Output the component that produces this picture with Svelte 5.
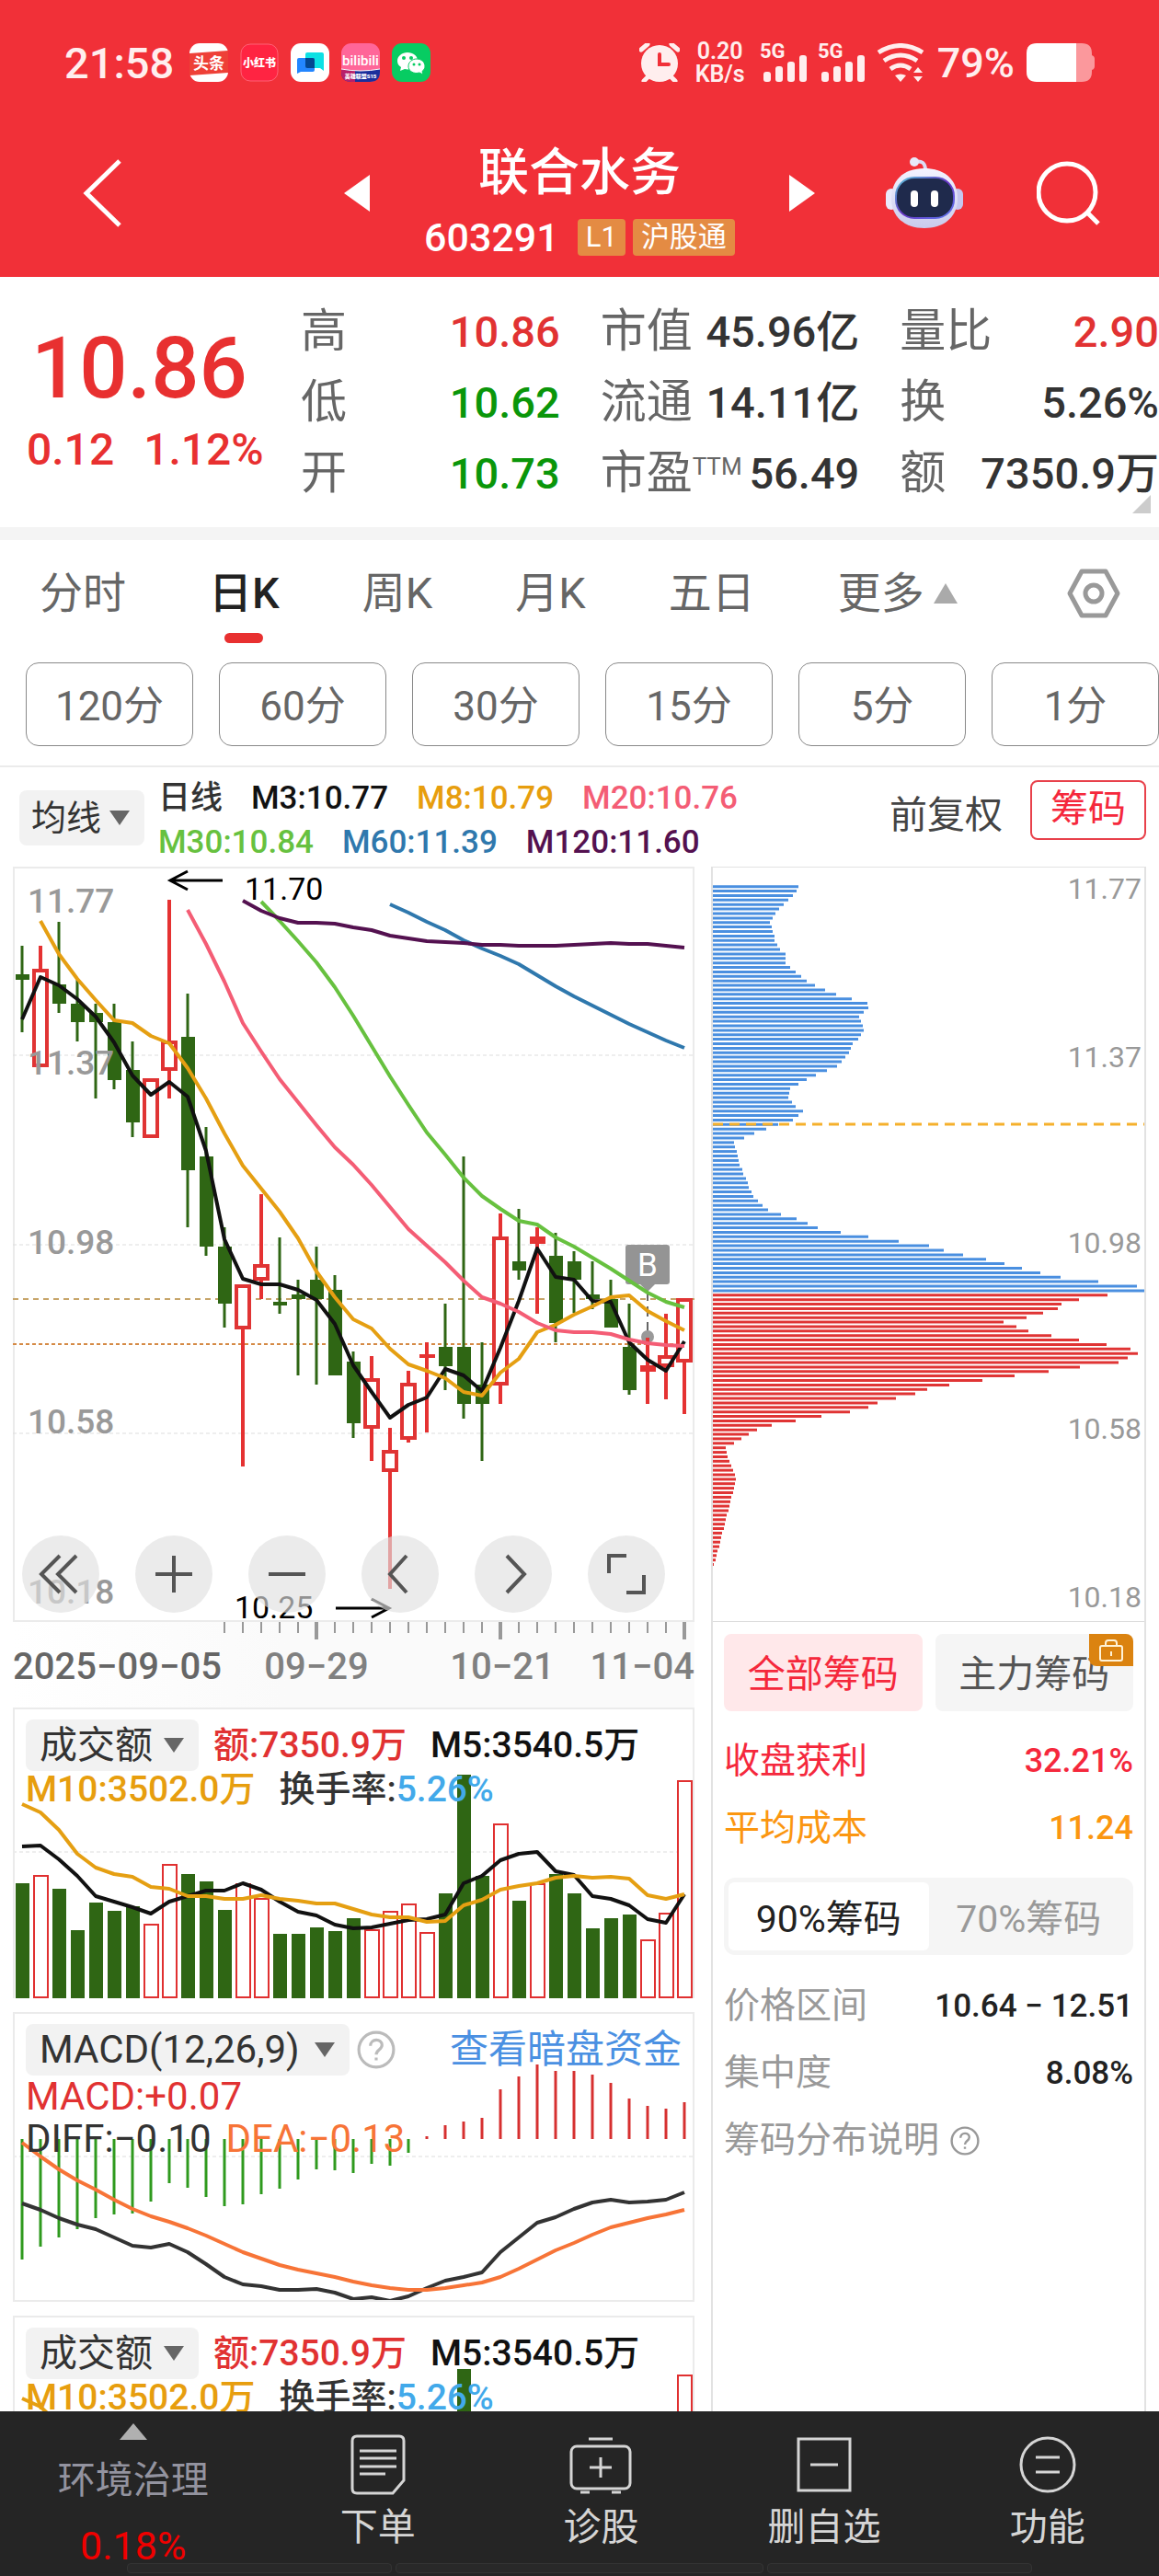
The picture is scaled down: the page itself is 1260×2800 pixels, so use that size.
<script>
  const stats = [
    [['高', '10.86', 'up'], ['低', '10.62', 'down'], ['开', '10.73', 'down']],
    [['市值', '45.96亿', ''], ['流通', '14.11亿', ''], ['市盈', '56.49', '', 'TTM']],
    [['量比', '2.90', 'up'], ['换', '5.26%', ''], ['额', '7350.9万', '']]
  ];

  const tabs = ['分时', '日K', '周K', '月K', '五日'];
  const periods = ['120分', '60分', '30分', '15分', '5分', '1分'];

  const legend = [
    [['日线', '#333'], ['M3:10.77', '#111'], ['M8:10.79', '#e79e0e'], ['M20:10.76', '#f45d75']],
    [['M30:10.84', '#67c13f'], ['M60:11.39', '#2f78ad'], ['M120:11.60', '#541150']]
  ];

  const x = (i) => 10 + i * 20;
  const line = (values, start = 0) => values.map((v, i) => `${x(i + start)},${v}`).join(' ');

  // direction, high, body top, body bottom, low
  const candles = [
    ['g', 86, 117, 123, 180], ['r', 86, 111, 218, 218], ['g', 60, 128, 149, 159], ['g', 123, 149, 169, 190],
    ['g', 149, 159, 169, 252], ['g', 149, 169, 232, 242], ['g', 190, 221, 278, 294], ['r', 230, 230, 295, 295],
    ['r', 36, 189, 222, 252], ['g', 138, 185, 330, 392], ['g', 283, 315, 413, 423], ['g', 392, 413, 475, 501],
    ['r', 454, 454, 503, 652], ['r', 356, 432, 450, 470], ['g', 403, 473, 477, 486], ['g', 449, 465, 470, 553],
    ['g', 413, 449, 470, 563], ['g', 444, 460, 553, 553], ['g', 527, 538, 605, 621], ['r', 532, 556, 611, 646],
    ['r', 610, 634, 658, 785], ['r', 548, 561, 623, 626], ['s', 517, 530, 534, 615], ['g', 475, 522, 543, 569],
    ['g', 315, 522, 584, 600], ['g', 517, 563, 584, 646], ['r', 377, 402, 564, 584], ['g', 372, 429, 439, 449],
    ['s', 392, 402, 410, 486], ['g', 398, 423, 496, 517], ['g', 418, 429, 449, 485], ['g', 429, 465, 470, 481],
    ['g', 449, 470, 501, 501], ['g', 475, 522, 569, 574], ['s', 512, 542, 549, 584], ['r', 486, 531, 544, 579],
    ['r', 469, 469, 539, 595]
  ];

  const averages = [
    { color: '#111', start: 0, values: [166, 120, 129, 144, 163, 191, 227, 248, 234, 250, 309, 405, 448, 454, 454, 460, 471, 497, 542, 571, 599, 585, 577, 546, 553, 570, 523, 472, 415, 446, 449, 472, 473, 517, 536, 548, 516] },
    { color: '#e59f12', start: 1, values: [59, 95, 122, 145, 167, 170, 184, 192, 219, 252, 290, 325, 350, 375, 404, 440, 468, 492, 502, 524, 541, 548, 556, 571, 575, 550, 535, 506, 498, 487, 478, 468, 466, 483, 494, 504] },
    { color: '#67c13f', start: 13, values: [38, 59, 81, 104, 131, 162, 195, 228, 259, 289, 313, 338, 358, 372, 385, 389, 403, 413, 425, 437, 450, 463, 473, 479] },
    { color: '#f45d75', start: 9, values: [47, 84, 125, 170, 201, 231, 256, 281, 305, 324, 346, 370, 394, 412, 430, 450, 468, 475, 484, 496, 504, 506, 506, 508, 514, 518, 520, 521] },
    { color: '#2f78ad', start: 20, values: [41, 50, 60, 69, 80, 89, 97, 106, 118, 130, 141, 151, 161, 171, 180, 189, 197] },
    { color: '#541150', start: 12, values: [37, 48, 56, 61, 61, 62, 66, 69, 75, 78, 81, 82, 83, 85, 85, 86, 86, 86, 85, 84, 83, 84, 84, 86, 88] }
  ];

  const priceMarks = [['11.77', 50], ['11.37', 226], ['10.98', 421], ['10.58', 616], ['10.18', 801]];
  const chipMarks = [['11.77', 35], ['11.37', 218], ['10.98', 420], ['10.58', 622], ['10.18', 805]];
  const ticks = Array.from({ length: 26 }, (_, i) => i + 11);

  const volumeTops = [191, 182, 197, 242, 212, 221, 216, 235, 170, 181, 189, 220, 191, 207, 246, 246, 239, 243, 229, 241, 221, 213, 244, 202, 73, 183, 126, 210, 191, 181, 202, 240, 229, 225, 252, 223, 79];
  const volumeM5 = [151, 150, 165, 183, 205, 211, 217, 224, 211, 205, 199, 199, 191, 198, 211, 222, 226, 236, 240, 239, 235, 231, 230, 225, 191, 183, 166, 159, 157, 178, 182, 205, 208, 215, 230, 234, 203];
  const volumeM10 = [105, 114, 133, 159, 174, 181, 184, 195, 197, 205, 205, 208, 208, 204, 208, 210, 213, 213, 219, 225, 228, 228, 233, 232, 215, 209, 198, 194, 191, 185, 183, 185, 184, 186, 204, 208, 203];

  const macdBars = [269, 255, 245, 236, 224, 220, 219, 206, 186, 191, 201, 211, 209, 198, 192, 182, 171, 172, 175, 165, 167, 153, 135, 123, 119, 115, 84, 70, 57, 64, 64, 68, 77, 94, 102, 105, 98];
  const diff = [208, 215, 224, 231, 236, 245, 254, 256, 252, 261, 274, 288, 296, 298, 302, 302, 301, 305, 312, 310, 314, 309, 300, 292, 288, 283, 261, 245, 229, 223, 214, 207, 204, 207, 206, 204, 196];
  const dea = [142, 157, 171, 183, 193, 204, 214, 222, 228, 235, 243, 252, 261, 268, 275, 280, 284, 288, 293, 297, 300, 302, 302, 300, 297, 294, 288, 279, 269, 259, 251, 242, 234, 229, 224, 220, 215];

  const chipsAbove = [93, 91, 87, 82, 77, 72, 68, 65, 62, 64, 65, 67, 67, 70, 73, 79, 79, 79, 84, 90, 96, 102, 111, 122, 134, 151, 168, 169, 164, 159, 161, 163, 164, 161, 158, 152, 150, 148, 144, 140, 135, 124, 112, 102, 93, 84, 83, 82, 86, 90, 98, 93, 87, 71, 58, 45, 34, 23, 24, 26, 27, 28, 29, 32, 33, 36, 38, 39, 42, 44, 49, 54, 60, 74, 91, 103, 114, 139, 169, 202, 235, 251, 272, 297, 317, 336, 356, 378, 419, 461, 471];
  const chipsBelow = [429, 398, 379, 375, 359, 341, 316, 330, 343, 368, 398, 428, 454, 462, 451, 441, 399, 365, 328, 293, 257, 233, 220, 199, 179, 169, 149, 118, 90, 64, 48, 39, 31, 23, 14, 15, 16, 18, 20, 22, 24, 25, 24, 23, 22, 20, 19, 18, 17, 15, 14, 13, 12, 10, 9, 8, 7, 5, 4, 3, 1];
  const chips = [...chipsAbove, ...chipsBelow];

  const controls = [
    ['回到最早', 'M41 22 21 42l20 20M59 22 39 42l20 20'],
    ['放大', 'M22 42h40M42 22v40'],
    ['缩小', 'M22 42h40'],
    ['向前', 'M49 22 31 42l18 20'],
    ['向后', 'M35 22l19 20-19 20'],
    ['全屏', 'M42 22H23v19M61 43v19H42']
  ];
</script>

{#snippet picker(label, text)}
  <span class="picker">
    <select aria-label={label}><option>{text}</option></select>
    <svg width="22" height="16" viewBox="0 0 22 16" aria-hidden="true"><path d="M0 0h22L11 16z" fill="#666" /></svg>
  </span>
{/snippet}

{#snippet signal()}
  <svg class="signal" width="50" height="42" viewBox="0 0 50 42" aria-hidden="true">
    <text x="-1" y="16" font-size="22" font-weight="700">5G</text>
    <rect x="3" y="31" width="8" height="11" rx="3" />
    <rect x="16" y="25" width="8" height="17" rx="3" />
    <rect x="29" y="20" width="8" height="22" rx="3" />
    <rect x="42" y="13" width="8" height="29" rx="3" />
  </svg>
{/snippet}

{#snippet help(size)}
  <svg width={size} height={size} viewBox="0 0 40 40" fill="none" stroke="currentColor" stroke-width="3" aria-hidden="true">
    <circle cx="20" cy="20" r="18" />
    <path d="M14 16c0-8 12-8 12-1 0 5-6 5-6 10M20 28v3" />
  </svg>
{/snippet}

{#snippet volume(shift)}
  <section class="box open">
    <svg class="plot" viewBox="2 {2 + shift} 737 314" role="img" aria-label="成交额">
      <path d="M0 157H741" class="grid" />
      {#each volumeTops as top, i}
        {#if candles[i][0] === 'g'}
          <rect x={x(i) - 7} y={top} width="15" height={316 - top} fill="#2f6614" />
        {:else}
          <rect x={x(i) - 7} y={top + 1} width="15" height={314 - top} fill="#fff" stroke="#e03030" stroke-width="2" />
        {/if}
      {/each}
      <polyline points={line(volumeM5)} stroke="#111" class="curve" />
      <polyline points={line(volumeM10)} stroke="#e59f12" class="curve" />
    </svg>
    <div class="caption">
      <div class="row">
        {@render picker('指标', '成交额')}
        <span class="up">额:7350.9万</span>
        <span class="ink">M5:3540.5万</span>
      </div>
      <div class="row second">
        <span class="gold">M10:3502.0万</span>
        <span>换手率:<b>5.26%</b></span>
      </div>
    </div>
  </section>
{/snippet}

<div class="app">
  <header>
    <div class="status">
      <time>21:58</time>
      <svg width="42" height="42" viewBox="0 0 42 42" aria-hidden="true">
        <rect width="42" height="42" rx="11" fill="#fff" />
        <path d="M0 11 42 8v24L0 35z" fill="#ee4037" />
        <text x="21" y="28" font-size="17" font-weight="700" text-anchor="middle" fill="#fff">头条</text>
      </svg>
      <svg width="42" height="42" viewBox="0 0 42 42" aria-hidden="true">
        <rect x="1" y="1" width="40" height="40" rx="10" fill="#ff2442" stroke="#ff6176" />
        <text x="21" y="26" font-size="12" font-weight="900" text-anchor="middle" fill="#fff">小红书</text>
      </svg>
      <svg width="42" height="42" viewBox="0 0 42 42" aria-hidden="true">
        <rect width="42" height="42" rx="11" fill="#fff" />
        <path d="M18 10h16q2 0 2 2v18l-4-3H18q-2 0-2-2V12q0-2 2-2z" fill="#0de0e4" />
        <path d="M9 16h15q2 0 2 2v11q0 2-2 2H11l-4 2V18q0-2 2-2z" fill="#2386ff" />
        <path d="M16 16h8q2 0 2 2v9h-8q-2 0-2-2z" fill="#044690" />
      </svg>
      <svg width="42" height="42" viewBox="0 0 42 42" aria-hidden="true">
        <rect width="42" height="42" rx="11" fill="#ff6699" />
        <path d="M0 28q21 4 42 0v3q0 11-11 11H11Q0 42 0 31z" fill="#1b2f9c" />
        <path d="M0 28q8 2 15 2v12h-4Q0 42 0 31z" fill="#b8206a" />
        <path d="M0 28q21 4 42 0" stroke="#fff" stroke-width="1" fill="none" />
        <text x="21" y="24" font-size="15" font-weight="500" text-anchor="middle" fill="#fff">bilibili</text>
        <text x="21" y="38" font-size="6" font-weight="900" text-anchor="middle" fill="#fff">英雄联盟S15</text>
      </svg>
      <svg width="42" height="42" viewBox="0 0 42 42" aria-hidden="true">
        <rect width="42" height="42" rx="11" fill="#07cc62" />
        <path d="M17 10c-6 0-11 4-11 9 0 3 1 5 4 7l-1 4 5-2 3 .5c6 0 11-4 11-9.500S23 10 17 10z" fill="#fff" />
        <path d="M27 17c5 0 9 3.500 9 8 0 2-1 4-3 5.500l1 3.500-4-2-3 .5c-5 0-9-3-9-7.500s4-8 9-8z" fill="#fff" stroke="#07cc62" />
        <g fill="#07cc62"><circle cx="13" cy="16" r="2" /><circle cx="21" cy="16" r="2" /><circle cx="24" cy="23" r="1.500" /><circle cx="30" cy="23" r="1.500" /></g>
      </svg>
      <svg class="alarm" width="44" height="42" viewBox="0 0 44 42" aria-hidden="true">
        <circle cx="22" cy="22" r="20" fill="#ffeeee" />
        <path d="M2 7l7-6M35 1l7 6M5 41l6-6M39 41l-6-6" stroke="#ffeeee" stroke-width="5" stroke-linecap="round" />
        <path d="M22 12v11h10" fill="none" stroke="#f13038" stroke-width="4" stroke-linecap="round" />
      </svg>
      <span class="speed"><span>0.20</span><span>KB/s</span></span>
      {@render signal()}
      {@render signal()}
      <svg width="53" height="42" viewBox="0 0 53 42" fill="none" stroke="#ffeeee" stroke-width="5" aria-hidden="true">
        <path d="M2 10q24-15 48 0M8 19q18-12 36 0M15 28q11-8 22 0" />
        <path d="M20 35q6-3 12 0l-6 7zM40 32l5-6 5 6zM40 36h10l-5 6z" fill="#ffeeee" stroke="none" />
      </svg>
      <span class="percent">79%</span>
      <svg width="74" height="42" viewBox="0 0 74 42" aria-hidden="true">
        <path d="M54 0h6q11 0 11 11v2q3 1 3 4v8q0 3-3 4v2q0 11-11 11h-6z" fill="#fb989c" />
        <path d="M11 0h43v42H11Q0 42 0 31V11Q0 0 11 0z" fill="#fff" />
      </svg>
    </div>

    <div class="bar">
      <button class="back" aria-label="返回">
        <svg width="42" height="74" viewBox="0 0 42 74" fill="none" stroke="#fff" stroke-width="5"><path d="M40 2 4 37l36 35" /></svg>
      </button>
      <div class="stock">
        <button aria-label="上一只"><svg width="28" height="40" viewBox="0 0 28 40"><path d="M28 0v40L0 20z" fill="#fff" /></svg></button>
        <div class="name">
          <h1>联合水务</h1>
          <p><span>603291</span><em>L1</em><em>沪股通</em></p>
        </div>
        <button aria-label="下一只"><svg width="28" height="40" viewBox="0 0 28 40"><path d="M0 0v40l28-20z" fill="#fff" /></svg></button>
      </div>
      <div class="tools">
        <button aria-label="智能助手">
          <svg width="84" height="78" viewBox="0 0 84 78">
            <defs>
              <linearGradient id="shell" x1="0" y1="0" x2="0" y2="1"><stop offset="0" stop-color="#f4f3ff" /><stop offset="1" stop-color="#c9cbec" /></linearGradient>
              <linearGradient id="rim" x1="0" y1="0" x2="1" y2="1"><stop offset="0" stop-color="#59c8d8" /><stop offset="0.500" stop-color="#6a35c8" /><stop offset="1" stop-color="#5d7cf0" /></linearGradient>
            </defs>
            <path d="M31 5q12-3 12 9" fill="none" stroke="#dcdcf4" stroke-width="4" />
            <circle cx="31" cy="5" r="5" fill="#e8e8fa" />
            <rect x="0" y="34" width="12" height="23" rx="6" fill="#e9e9fb" />
            <rect x="72" y="34" width="12" height="23" rx="6" fill="#c6c7ee" />
            <path d="M42 12c24 0 36 14 36 33S64 77 42 77 6 64 6 45s12-33 36-33z" fill="url(#shell)" />
            <rect x="11" y="22" width="63" height="44" rx="20" fill="#1f2a4c" stroke="url(#rim)" stroke-width="2" />
            <rect x="27" y="36" width="8" height="18" rx="4" fill="#fff" />
            <rect x="49" y="36" width="8" height="18" rx="4" fill="#fff" />
          </svg>
        </button>
        <button aria-label="搜索">
          <svg width="70" height="70" viewBox="0 0 70 70" fill="none" stroke="#fff" stroke-width="5"><circle cx="33" cy="34" r="31" /><path d="M54 55l13 13" /></svg>
        </button>
      </div>
    </div>
  </header>

  <section class="quote">
    <div class="price">
      <strong>10.86</strong>
      <p><span>0.12</span><span>1.12%</span></p>
    </div>
    <div class="stats">
      {#each stats as column}
        <dl>
          {#each column as [label, value, tone, sup]}
            <div><dt>{label}{#if sup}<sup>{sup}</sup>{/if}</dt><dd class={tone}>{value}</dd></div>
          {/each}
        </dl>
      {/each}
    </div>
    <svg class="corner" width="20" height="20" viewBox="0 0 20 20" aria-hidden="true"><path d="M20 0v20H0z" fill="#ccc" /></svg>
  </section>

  <nav class="tabs">
    {#each tabs as tab}
      <button class:active={tab === '日K'}>{tab}</button>
    {/each}
    <button class="more">更多<svg width="26" height="22" viewBox="0 0 26 22" aria-hidden="true"><path d="M13 0 26 22H0z" fill="#aaa" /></svg></button>
    <button class="settings" aria-label="设置">
      <svg width="58" height="54" viewBox="0 0 58 54" fill="none" stroke="#999" stroke-width="5" stroke-linejoin="round"><path d="M16 3h26l13 24-13 24H16L3 27z" /><circle cx="29" cy="27" r="9" /></svg>
    </button>
  </nav>
  <div class="periods">
    {#each periods as period}<button>{period}</button>{/each}
  </div>

  <div class="toolbar">
    {@render picker('主图指标', '均线')}
    <div class="legend">
      {#each legend as row}
        <p>{#each row as [text, color]}<span style:color>{text}</span>{/each}</p>
      {/each}
    </div>
    <button class="adjust">前复权</button>
    <button class="chip-toggle">筹码</button>
  </div>

  <main>
    <div class="left">
      <section class="box kline">
        <svg class="plot" viewBox="2 2 737 817" role="img" aria-label="日K线">
          <path d="M0 205H741M0 411H741M0 616H741" class="grid" />
          <path d="M0 470H741" stroke="#c7a56a" stroke-width="2" stroke-dasharray="6 5" />
          <path d="M0 519H741" stroke="#d58a45" stroke-width="2" stroke-dasharray="4 3" />
          <path d="M690 461V508" stroke="#666" stroke-width="2" stroke-dasharray="11 6" />
          <circle cx="690" cy="511" r="7" fill="#999" />
          {#each candles as [kind, high, top, bottom, low], i}
            {#if kind === 'g'}
              <path d="M{x(i)} {high}V{low}" stroke="#2f6614" stroke-width="3" />
              <rect x={x(i) - 7} y={top} width="15" height={bottom - top} fill="#2f6614" />
            {:else}
              <path d="M{x(i)} {high}V{top}M{x(i)} {bottom}V{low}" stroke="#e53232" stroke-width="4" />
              {#if kind === 's'}
                <rect x={x(i) - 8} y={top} width="17" height={bottom - top} fill="#e53232" />
              {:else}
                <rect x={x(i) - 7} y={top + 2} width="14" height={bottom - top - 4} fill="#fff" stroke="#e03434" stroke-width="4" />
              {/if}
            {/if}
          {/each}
          {#each priceMarks as [text, y]}
            <text x="16" {y} font-size="37" font-weight="500" fill="#999">{text}</text>
          {/each}
          <path d="M669 411h42q3 0 3 3v37q0 3-3 3h-13l-8 8-8-8h-13q-3 0-3-3v-37q0-3 3-3z" fill="#949494" />
          <text x="690" y="445" font-size="35" text-anchor="middle" fill="#fff">B</text>
          {#each averages as { color, start, values }}
            <polyline points={line(values, start)} stroke={color} class="curve" />
          {/each}
          <g font-size="34" fill="#000">
            <text x="252" y="36">11.70</text>
            <text x="241" y="817">10.25</text>
          </g>
          <path d="M228 15H172M190 5 171 15l19 10M351 806h57M390 796l19 10-19 10" fill="none" stroke="#000" stroke-width="3" />
        </svg>
        <div class="controls">
          {#each controls as [label, d]}
            <button aria-label={label}><svg width="84" height="84" viewBox="0 0 84 84"><path {d} fill="none" stroke="#555" stroke-width="4" /></svg></button>
          {/each}
        </div>
      </section>

      <svg class="axis" viewBox="0 0 741 93" role="img" aria-label="日期">
        {#each ticks as i}
          <path d="M{x(i)} 0V{i % 10 === 6 ? 19 : 12}" stroke="#999" stroke-width={i % 10 === 6 ? 4 : 2} />
        {/each}
        <g font-size="40" font-weight="500" fill="#808080">
          <text x="0" y="62" fill="#666">2025−09−05</text>
          <text x="330" y="62" text-anchor="middle">09−29</text>
          <text x="532" y="62" text-anchor="middle">10−21</text>
          <text x="741" y="62" text-anchor="end">11−04</text>
        </g>
      </svg>

      {@render volume(0)}

      <section class="box">
        <svg class="plot" viewBox="2 2 737 311" role="img" aria-label="MACD">
          <path d="M0 157H741" class="grid" />
          {#each macdBars as end, i}
            <path d="M{x(i)} 138V{end}" stroke={end > 138 ? '#2f9a1e' : '#d63030'} stroke-width="3" />
          {/each}
          <polyline points={line(diff)} stroke="#333" class="curve" />
          <polyline points={line(dea)} stroke="#f77437" class="curve" />
        </svg>
        <div class="caption macd">
          <div class="row">
            {@render picker('指标', 'MACD(12,26,9)')}
            <button class="help" aria-label="说明">{@render help(42)}</button>
            <a href="#fund">查看暗盘资金</a>
          </div>
          <div class="row second"><span class="up">MACD:+0.07</span></div>
          <div class="row second"><span>DIFF:−0.10</span><span class="dea">DEA:−0.13</span></div>
        </div>
      </section>

      {@render volume(15)}
    </div>

    <aside>
      <svg class="plot chips" viewBox="2 1 469 819" role="img" aria-label="筹码分布">
        {#each chips as length, i}
          <path d="M2 {Math.round(217 + i * 48.8) / 10}h{length}" stroke={i < chipsAbove.length ? '#4a8fe0' : '#e03434'} stroke-width="3" />
        {/each}
        <path d="M2 280H471" stroke="#f5b02c" stroke-width="3" stroke-dasharray="11 7" />
        <g font-size="32" fill="#999" text-anchor="end">
          {#each chipMarks as [text, y]}<text x="468" {y}>{text}</text>{/each}
        </g>
      </svg>
      <div class="panel">
        <div class="kinds">
          <button class="active">全部筹码</button>
          <button>主力筹码
            <span class="lock"><svg width="28" height="26" viewBox="0 0 28 26" fill="none" stroke="#fff3d8" stroke-width="2"><rect x="2" y="8" width="24" height="16" rx="2" /><path d="M8 8V5q0-3 3-3h6q3 0 3 3v3M14 14v5" /></svg></span>
          </button>
        </div>
        <dl>
          <div class="profit"><dt>收盘获利</dt><dd>32.21%</dd></div>
          <div class="cost"><dt>平均成本</dt><dd>11.24</dd></div>
        </dl>
        <div class="segment">
          <button class="active">90%筹码</button>
          <button>70%筹码</button>
        </div>
        <dl>
          <div><dt>价格区间</dt><dd>10.64 − 12.51</dd></div>
          <div><dt>集中度</dt><dd>8.08%</dd></div>
        </dl>
        <button class="explain">筹码分布说明 {@render help(32)}</button>
      </div>
    </aside>
  </main>

  <footer>
    <button class="sector">
      <svg width="30" height="18" viewBox="0 0 30 18" aria-hidden="true"><path d="M15 0 30 18H0z" fill="#b0b0b0" /></svg>
      <span>环境治理</span>
      <b>0.18%</b>
    </button>
    <button>
      <svg width="68" height="68" viewBox="0 0 68 68"><path d="M11 3h46q5 0 5 5v43L50 65H11q-5 0-5-5V8q0-5 5-5zM14 19h40M14 27h40M14 36h40M14 44h28" /></svg>
      <span>下单</span>
    </button>
    <button>
      <svg width="68" height="68" viewBox="0 0 68 68"><rect x="2" y="14" width="64" height="46" rx="6" /><path d="M21 6h26M34 26v22M22 37h24M12 64h10M46 64h10" /></svg>
      <span>诊股</span>
    </button>
    <button>
      <svg width="68" height="68" viewBox="0 0 68 68"><path d="M6 6h56v56H6zM19 34h30" /></svg>
      <span>删自选</span>
    </button>
    <button>
      <svg width="68" height="68" viewBox="0 0 68 68"><circle cx="34" cy="34" r="29" /><path d="M21 26h26M21 42h26" /></svg>
      <span>功能</span>
    </button>
    <div class="handle" aria-hidden="true"><i></i><i></i><i></i></div>
  </footer>
</div>

<style>
  :global(body) {
    background: #fff;
  }

  .app {
    display: flex;
    flex-direction: column;
    height: 100vh;
    overflow: hidden;
    color: #333;
    font-family: Roboto, 'Noto Sans CJK SC', sans-serif;
  }

  .app :is(h1, p, dl, dd) {
    margin: 0;
  }

  button,
  select {
    padding: 0;
    border: 0;
    background: none;
    color: inherit;
    font: inherit;
    white-space: nowrap;
  }

  svg {
    display: block;
    flex: none;
  }

  .up {
    color: #e13232;
  }

  .down {
    color: #0a960a;
  }

  /* header */
  header {
    background: #f13038;
    color: #fff;
  }

  .status {
    display: flex;
    align-items: center;
    gap: 13px;
    height: 136px;
    padding: 0 70px;
    color: #ffeeee;
  }

  time {
    margin-right: 4px;
    font-size: 47px;
    font-weight: 500;
  }

  .alarm {
    margin-left: auto;
  }

  .speed {
    display: grid;
    margin: 0 4px;
    font-size: 25px;
    font-weight: 600;
    line-height: 25px;
    text-align: center;
  }

  .signal {
    overflow: visible;
    fill: #ffeeee;
  }

  .percent {
    font-size: 45px;
    font-weight: 500;
  }

  .bar {
    display: grid;
    grid-template-columns: 1fr 512px 1fr;
    align-items: center;
    padding: 3px 63px 20px;
  }

  .back {
    justify-self: start;
    margin-left: 27px;
  }

  .stock {
    display: flex;
    align-items: center;
    justify-content: space-between;
  }

  .name {
    text-align: center;
  }

  h1 {
    font-size: 55px;
    font-weight: 500;
    line-height: 96px;
  }

  .name p {
    display: flex;
    align-items: center;
    gap: 8px;
    font-size: 43px;
    line-height: 46px;
  }

  .name p span {
    margin-right: 12px;
    font-weight: 500;
  }

  em {
    padding: 0 9px;
    border-radius: 4px;
    background: #e48b43;
    font-size: 31px;
    font-style: normal;
    line-height: 40px;
  }

  .tools {
    display: flex;
    align-items: center;
    justify-content: flex-end;
    gap: 80px;
  }

  /* quote */
  .quote {
    position: relative;
    display: grid;
    grid-template-columns: 327fr 933fr;
    padding: 21px 0 20px;
    border-bottom: 14px solid #f4f4f4;
  }

  .price {
    padding: 29px 0 0 29px;
    color: #e83030;
    font-weight: 500;
  }

  .price strong {
    display: block;
    padding-left: 5px;
    font-size: 92px;
    font-weight: 500;
    line-height: 100px;
  }

  .price p {
    display: flex;
    gap: 32px;
    padding-top: 8px;
    font-size: 48px;
    line-height: 60px;
  }

  .stats {
    display: grid;
    grid-template-columns: repeat(3, 1fr);
    gap: 44px;
  }

  .stats dl > div {
    display: flex;
    justify-content: space-between;
    line-height: 77px;
  }

  .stats dt {
    color: #666;
    font-size: 50px;
  }

  .stats dd {
    font-size: 47px;
    font-weight: 500;
  }

  sup {
    font-size: 26px;
    line-height: 28px;
    vertical-align: 15px;
  }

  .corner {
    position: absolute;
    right: 9px;
    bottom: 15px;
  }

  /* period tabs */
  .tabs {
    display: flex;
    align-items: flex-start;
    gap: 90px;
    padding: 20px 42px 0 43px;
    color: #666;
    font-size: 47px;
    line-height: 76px;
  }

  .tabs .active {
    color: #222;
    font-weight: 500;
  }

  .tabs .active::after {
    content: '';
    display: block;
    width: 42px;
    height: 11px;
    margin: 5px auto 0;
    border-radius: 6px;
    background: #e83030;
  }

  .more {
    display: flex;
    align-items: center;
    gap: 10px;
  }

  .settings {
    display: grid;
    place-items: center;
    height: 76px;
    margin-left: auto;
  }

  .periods {
    display: grid;
    grid-template-columns: repeat(6, 1fr);
    gap: 28px;
    margin: 21px 0;
    padding-left: 28px;
    color: #666;
    font-size: 44px;
  }

  .periods button {
    height: 91px;
    padding-bottom: 3px;
    border: 1px solid #888;
    border-radius: 14px;
  }

  /* indicator toolbar */
  .toolbar {
    display: flex;
    align-items: flex-start;
    padding: 10px 14px 2px 21px;
    border-top: 2px solid #ebebeb;
  }

  .picker {
    display: inline-grid;
    align-items: center;
    border-radius: 8px;
    background: #f2f2f2;
  }

  .picker > select,
  .picker > svg {
    grid-area: 1 / 1;
  }

  .picker > svg {
    justify-self: end;
    margin-right: 16px;
    pointer-events: none;
  }

  select {
    height: 56px;
    padding: 0 50px 0 15px;
    appearance: none;
    font-size: 41px;
    line-height: 56px;
  }

  .toolbar .picker {
    margin: 15px 15px 0 0;
  }

  .toolbar select {
    height: 60px;
    padding: 0 46px 0 13px;
    font-size: 38px;
    line-height: 60px;
  }

  .legend p {
    display: flex;
    gap: 31px;
    font-size: 35px;
    font-weight: 500;
    line-height: 48px;
    white-space: nowrap;
  }

  .adjust {
    margin: 4px 30px 0 auto;
    color: #444;
    font-size: 41px;
    line-height: 76px;
  }

  .chip-toggle {
    width: 126px;
    height: 65px;
    margin-top: 4px;
    padding-bottom: 3px;
    border: 2px solid #e8414b;
    border-radius: 8px;
    color: #f5283c;
    font-size: 41px;
    line-height: 56px;
  }

  /* charts */
  main {
    display: grid;
    flex: 1;
    grid-template-columns: 741fr 473fr;
    gap: 18px;
    min-height: 0;
    overflow: hidden;
    padding: 0 14px;
  }

  .box {
    position: relative;
    display: grid;
    margin-bottom: 15px;
    border: 2px solid #ebebeb;
  }

  .kline {
    margin-bottom: 0;
  }

  .kline > .plot {
    overflow: visible;
  }

  .open {
    border-bottom: 0;
  }

  .box > .plot,
  .caption {
    grid-area: 1 / 1;
  }

  .plot {
    width: 100%;
    height: auto;
  }

  .grid {
    stroke: #ddd;
    stroke-width: 1;
    stroke-dasharray: 4 3;
  }

  .curve {
    fill: none;
    stroke-width: 4;
    stroke-linejoin: round;
  }

  .controls {
    position: absolute;
    bottom: 8px;
    left: 8px;
    display: flex;
    gap: 39px;
  }

  .controls button {
    border-radius: 50%;
    background: rgba(224, 224, 224, 0.65);
  }

  .axis {
    width: 100%;
    height: auto;
    background: linear-gradient(90deg, #fff, #fafafa 40%);
  }

  .caption {
    z-index: 1;
    padding: 11px 12px 0;
    font-size: 39px;
    font-weight: 500;
  }

  .row {
    display: flex;
    align-items: center;
    gap: 26px;
    line-height: 56px;
    white-space: nowrap;
  }

  .row .picker {
    margin-right: -10px;
    font-weight: 400;
  }

  .second {
    line-height: 40px;
  }

  .ink {
    color: #111;
  }

  .gold {
    color: #e79e0e;
  }

  .second b {
    color: #42a9ea;
    font-weight: 500;
  }

  .macd {
    font-size: 42px;
    font-weight: 400;
  }

  .macd select {
    padding-right: 54px;
    font-size: 42px;
  }

  .macd .second {
    gap: 16px;
    line-height: 46px;
  }

  .help {
    margin-left: -8px;
    color: #bbb;
  }

  a {
    margin-left: auto;
    color: #4a90e2;
    text-decoration: none;
  }

  .dea {
    color: #f77437;
  }

  /* chip distribution */
  aside {
    border: 2px solid #e2e2e2;
    border-width: 1px 2px 0;
  }

  .chips {
    border-bottom: 1px solid #ddd;
  }

  .panel {
    padding: 13px 12px;
    font-size: 39px;
  }

  .kinds {
    display: grid;
    grid-template-columns: 1fr 1fr;
    gap: 14px;
    margin-bottom: 18px;
    font-size: 41px;
  }

  .kinds button {
    position: relative;
    height: 84px;
    padding-bottom: 4px;
    border-radius: 8px;
    background: #f5f5f5;
    color: #555;
  }

  .kinds .active {
    background: #ffe8ea;
    color: #f5283c;
  }

  .lock {
    position: absolute;
    top: 0;
    right: 0;
    display: grid;
    place-items: center;
    width: 48px;
    height: 35px;
    border-radius: 0 8px 0 8px;
    background: #db8310;
  }

  .panel dl > div {
    display: flex;
    justify-content: space-between;
    line-height: 73px;
  }

  .panel dt {
    color: #999;
  }

  .panel dd {
    color: #222;
    font-size: 35px;
    font-weight: 500;
  }

  .profit > dt,
  .profit > dd {
    color: #f5283c;
  }

  .profit > dd,
  .cost > dd {
    font-size: 36px;
  }

  .cost > dt,
  .cost > dd {
    color: #fb9610;
  }

  .segment {
    display: grid;
    grid-template-columns: 1fr 1fr;
    margin: 17px 0 19px;
    padding: 5px;
    border-radius: 12px;
    background: #f5f5f5;
    color: #999;
    font-size: 41px;
  }

  .segment button {
    height: 74px;
    padding-bottom: 3px;
    border-radius: 6px;
  }

  .segment .active {
    background: #fff;
    color: #222;
  }

  .explain {
    display: flex;
    align-items: center;
    gap: 12px;
    color: #999;
    line-height: 73px;
  }

  /* bottom bar */
  footer {
    position: relative;
    display: grid;
    grid-template-columns: 290fr repeat(4, 243fr);
    height: 179px;
    background: #252525;
    color: #d5d5d5;
    font-size: 41px;
  }

  footer button {
    display: flex;
    flex-direction: column;
    align-items: center;
    padding-top: 24px;
    line-height: 60px;
  }

  footer button > svg {
    margin-bottom: 4px;
    fill: none;
    stroke: #d5d5d5;
    stroke-width: 3;
  }

  footer .sector {
    padding-top: 13px;
    color: #93939f;
  }

  .sector > svg {
    margin-bottom: 14px;
    stroke: none;
  }

  .sector b {
    margin-top: 11px;
    color: #f00000;
    font-size: 43px;
    font-weight: 400;
  }

  .handle {
    position: absolute;
    bottom: 3px;
    left: 138px;
    right: 138px;
    display: grid;
    grid-template-columns: 288fr 399fr 288fr;
    gap: 4px;
  }

  .handle i {
    height: 9px;
    border: 1px solid #343434;
    border-radius: 4px;
    background: #292929;
  }
</style>
